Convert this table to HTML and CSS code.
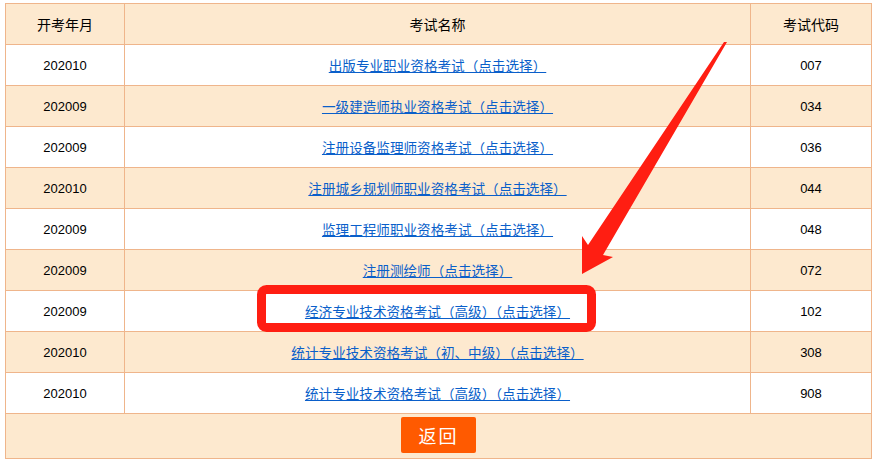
FILE: index.html
```html
<!DOCTYPE html>
<html lang="zh-CN">
<head>
    <meta charset="UTF-8">
    <title>考试选择</title>
    <link rel="stylesheet" href="styles.css">
</head>
<body>
    <div class="wrap">
        <table class="exam">
            <tr class="head">
                <td class="c1">开考年月</td>
                <td class="c2">考试名称</td>
                <td class="c3">考试代码</td>
            </tr>
            <tr class="odd">
                <td>202010</td>
                <td><a href="#">出版专业职业资格考试（点击选择）</a></td>
                <td>007</td>
            </tr>
            <tr class="even">
                <td>202009</td>
                <td><a href="#">一级建造师执业资格考试（点击选择）</a></td>
                <td>034</td>
            </tr>
            <tr class="odd">
                <td>202009</td>
                <td><a href="#">注册设备监理师资格考试（点击选择）</a></td>
                <td>036</td>
            </tr>
            <tr class="even">
                <td>202010</td>
                <td><a href="#">注册城乡规划师职业资格考试（点击选择）</a></td>
                <td>044</td>
            </tr>
            <tr class="odd">
                <td>202009</td>
                <td><a href="#">监理工程师职业资格考试（点击选择）</a></td>
                <td>048</td>
            </tr>
            <tr class="even">
                <td>202009</td>
                <td><a href="#">注册测绘师（点击选择）</a></td>
                <td>072</td>
            </tr>
            <tr class="odd">
                <td>202009</td>
                <td><a href="#">经济专业技术资格考试（高级）（点击选择）</a></td>
                <td>102</td>
            </tr>
            <tr class="even">
                <td>202010</td>
                <td><a href="#">统计专业技术资格考试（初、中级）（点击选择）</a></td>
                <td>308</td>
            </tr>
            <tr class="odd">
                <td>202010</td>
                <td><a href="#">统计专业技术资格考试（高级）（点击选择）</a></td>
                <td>908</td>
            </tr>
            <tr class="foot">
                <td colspan="3"><button class="back">返回</button></td>
            </tr>
        </table>
    </div>

    <!-- 标注：箭头和红框 -->
    <svg class="mark" width="879" height="462" viewBox="0 0 879 462">
        <rect x="261.5" y="289.5" width="330" height="38" rx="5" fill="none" stroke="#ff1e12" stroke-width="9"/>
        <polygon points="724,42 727,42 603,255 613,257 582,274 582,236 588,245" fill="#ff1e12"/>
    </svg>
</body>
</html>
```

FILE: styles.css
```css
body {
    margin: 0;
    padding: 0;
    font-family: "Liberation Sans", "Noto Sans CJK SC", sans-serif;
}

.wrap {
    padding: 3px 0 0 5px;
}

.exam {
    width: 867px;
    border-collapse: collapse;
    table-layout: fixed;
}

.exam td {
    height: 40px;
    padding: 0;
    border: 1px solid #efb58b;
    text-align: center;
    vertical-align: middle;
    font-size: 13px;
    color: #000;
}

.exam .c1 {
    width: 118px;
}

.exam .c3 {
    width: 120px;
}

.head td {
    font-family: "Noto Sans CJK SC", sans-serif;
    font-size: 14px;
}

.head,
.even,
.foot {
    background: #fde9cf;
}

.odd {
    background: #fff;
}

.exam a {
    font-family: "Noto Sans CJK SC", sans-serif;
    font-size: 13.6px;
    color: #0a5fca;
    text-decoration: underline;
}

.foot td {
    height: 41px;
    padding-top: 3px;
    vertical-align: top;
}

.back {
    width: 75px;
    height: 36px;
    border: none;
    border-radius: 2px;
    background: #ff5a00;
    color: #fff;
    font-family: "Noto Sans CJK SC", sans-serif;
    font-size: 18px;
    letter-spacing: 2px;
    padding: 0;
}

.mark {
    position: absolute;
    left: 0;
    top: 0;
    pointer-events: none;
}
```
